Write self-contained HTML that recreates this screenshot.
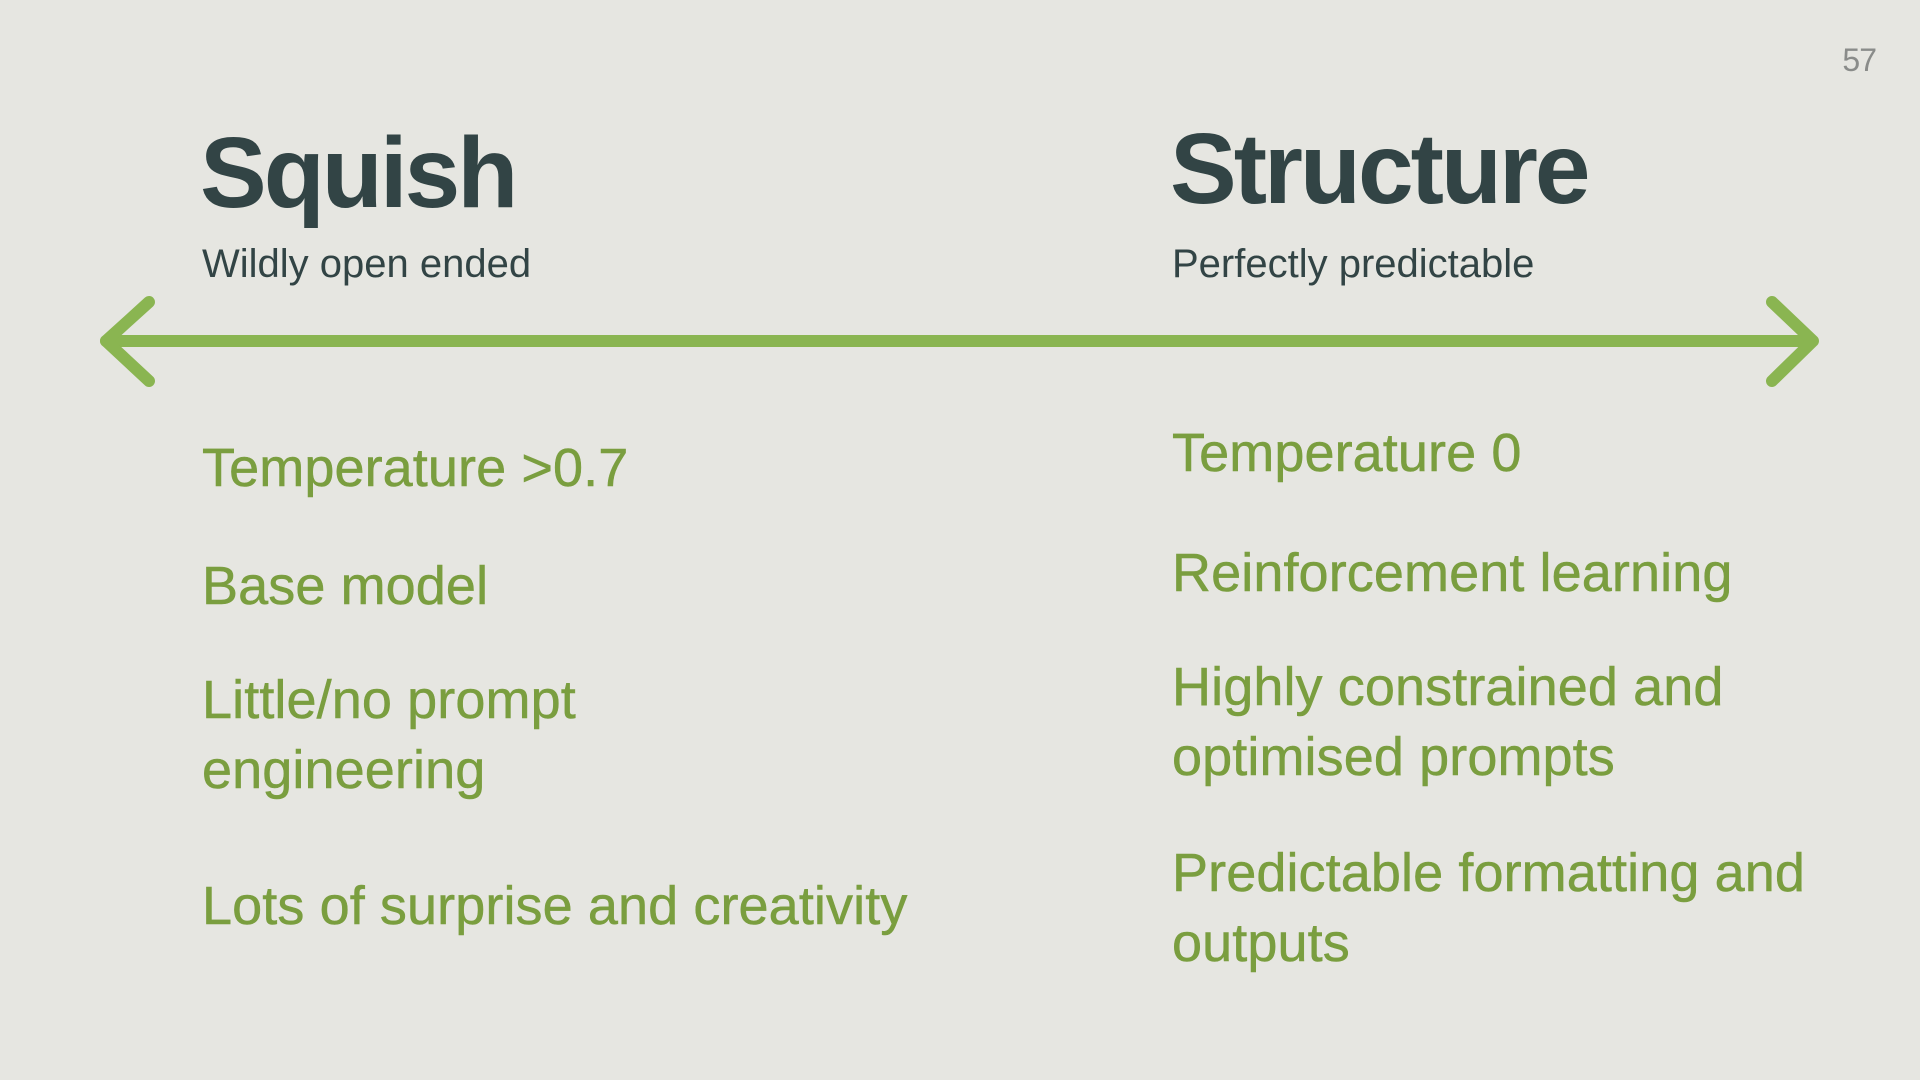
<!DOCTYPE html>
<html><head><style>
html,body{margin:0;padding:0}
body{width:1920px;height:1080px;background:#e6e6e1;position:relative;overflow:hidden;font-family:"Liberation Sans",sans-serif}
div{position:absolute;line-height:1;white-space:nowrap}
.t{font-weight:bold;font-size:100px;color:#324445;letter-spacing:-3px}
.s{font-size:40px;color:#324445}
.g{font-size:54px;color:#7a9e3f;letter-spacing:0.1px;-webkit-text-stroke:0.5px #7a9e3f}
.g2{line-height:70px}
</style></head><body>
<div style="right:44px;top:44px;font-size:32px;color:#8a8c8a;letter-spacing:-1px">57</div>
<div class="t" style="left:200px;top:123px">Squish</div>
<div class="t" style="left:1170px;top:119px">Structure</div>
<div class="s" style="left:202px;top:244px">Wildly open ended</div>
<div class="s" style="left:1172px;top:244px">Perfectly predictable</div>
<svg style="position:absolute;left:0;top:0" width="1920" height="1080">
<g stroke="#8ab551" stroke-width="12" stroke-linecap="round" stroke-linejoin="round" fill="none">
<line x1="106" y1="341" x2="1812" y2="341"/>
<polyline points="149,302 106,341 149,381"/>
<polyline points="1772,302 1813,341 1772,381"/>
</g></svg>
<div class="g" style="left:202px;top:441px">Temperature &gt;0.7</div>
<div class="g" style="left:202px;top:559px">Base model</div>
<div class="g g2" style="left:202px;top:665px">Little/no prompt<br>engineering</div>
<div class="g" style="left:202px;top:879px">Lots of surprise and creativity</div>
<div class="g" style="left:1172px;top:426px">Temperature 0</div>
<div class="g" style="left:1172px;top:546px">Reinforcement learning</div>
<div class="g g2" style="left:1172px;top:652px">Highly constrained and<br>optimised prompts</div>
<div class="g g2" style="left:1172px;top:838px">Predictable formatting and<br>outputs</div>
</body></html>
